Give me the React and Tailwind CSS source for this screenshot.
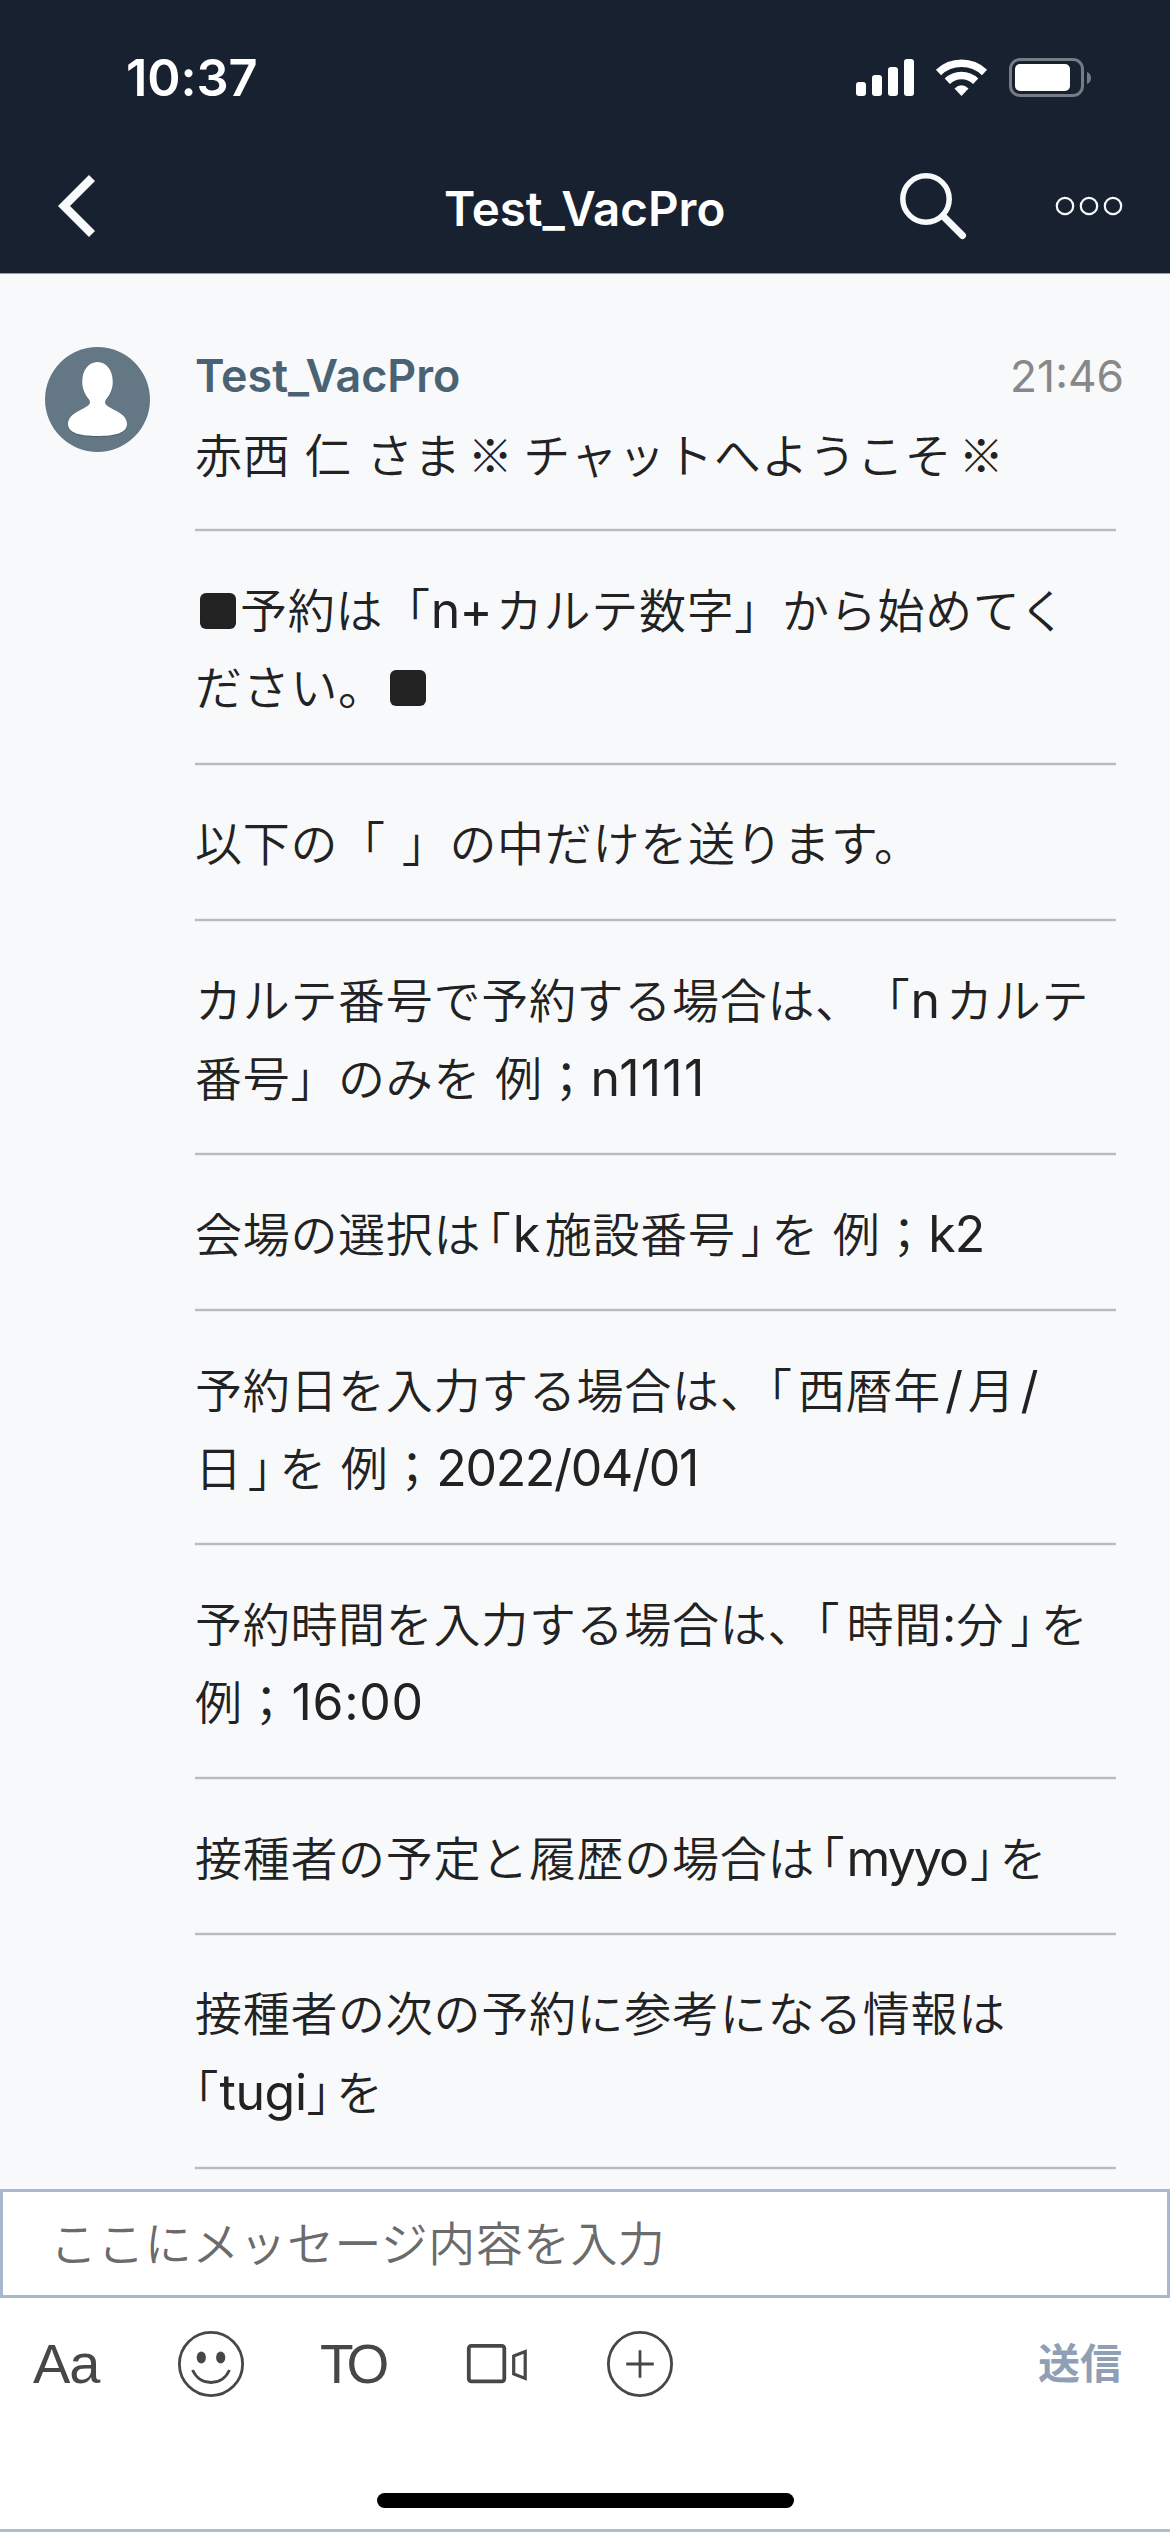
const Latin = ({ children, className = "tracking-normal" }) => (
  <span className={`inline-block font-['Inter',sans-serif] font-normal text-[50px] ${className}`}>{children}</span>
);

const Half = ({ children, className = "" }) => (
  <span className={`inline-block tracking-normal [font-feature-settings:'halt'] ${className}`}>{children}</span>
);

const Kome = () => (
  <span className="inline-block w-[62px] pr-1 text-center font-['Noto_Sans_CJK_JP',sans-serif] text-[45px] tracking-normal">※</span>
);

const Square = ({ className = "" }) => (
  <span
    className={`inline-block w-9 h-9 rounded-[6px] bg-[#222222] text-[#222222] text-[30px] leading-9 text-center overflow-hidden align-[-1px] tracking-normal ${className}`}
  >
    ■
  </span>
);

const Line = ({ children }) => <div className="h-[78px] pt-[2px] leading-[78px] whitespace-pre">{children}</div>;

const Rule = () => (
  <div className="h-[78px] flex items-center">
    <div className="w-[921px] h-1 bg-[#b9bbbe] border-y border-[#ebecef]"></div>
  </div>
);

function StatusBar() {
  return (
    <div className="h-[139px] flex items-start justify-between pl-[126px] pr-[79px] pt-[58px]">
      <div className="text-[50.5px] leading-[40px] font-semibold tracking-[-0.1px]">10:37</div>
      <svg width="235" height="40" viewBox="856 58 235 40" fill="#fff">
        <rect x="856" y="82" width="10" height="14" rx="3" />
        <rect x="872" y="75" width="10" height="21" rx="3" />
        <rect x="888" y="67" width="10" height="29" rx="3" />
        <rect x="904" y="59" width="10" height="37" rx="3" />
        {/* wifi */}
        <g fill="none" stroke="#fff" strokeWidth="7.5">
          <path d="M938.5 72.5a33.5 33.5 0 0 1 46 0" />
          <path d="M947.3 81.3a20.5 20.5 0 0 1 28.4 0" />
        </g>
        <path d="M954.5 88.5q7-6.5 14 0L961.5 96z" />
        {/* battery */}
        <rect x="1010.5" y="59.5" width="72" height="36" rx="9.5" fill="none" stroke="#777c84" strokeWidth="3" />
        <rect x="1015" y="64" width="55" height="27" rx="5" />
        <path d="M1087 72a6.5 6.5 0 0 1 0 12z" fill="#777c84" />
      </svg>
    </div>
  );
}

function NavBar() {
  return (
    <div className="h-[134px] flex items-center pl-[56px] pr-[46px]">
      <svg width="42" height="72" viewBox="56 170 42 72">
        <path d="M92 178L64 206l28 28" fill="none" stroke="#f8f9fb" strokeWidth="8.5" />
      </svg>
      <h1 className="flex-1 pt-1.5 pl-[346px] text-[47.5px] font-semibold">Test_VacPro</h1>
      <svg width="226" height="68" viewBox="898 172 226 68" fill="none" stroke="#f8f9fb">
        <circle cx="926" cy="199" r="23.2" strokeWidth="5.5" />
        <path d="M943 216l19.5 19.5" strokeWidth="7" strokeLinecap="round" />
        <circle cx="1065" cy="206" r="8.2" strokeWidth="2.2" />
        <circle cx="1089" cy="206" r="8.2" strokeWidth="2.2" />
        <circle cx="1113" cy="206" r="8.2" strokeWidth="2.2" />
      </svg>
    </div>
  );
}

function Avatar() {
  return (
    <svg className="shrink-0" width="105" height="105" viewBox="0 0 105 105">
      <circle cx="52.5" cy="52.5" r="52.5" fill="#637785" />
      <path
        d="M52.5 16c9 0 15.300 8.500 15.300 20 0 7-3 13-6 16.500-2 2.500-2.500 4.500-.5 6.500 2 2 6.500 4 11 6.500 5.500 3 9.700 7 9.700 12.500 0 9-12 12-29.500 12s-29.500-3-29.500-12c0-5.500 4.200-9.500 9.700-12.500 4.500-2.500 9-4.500 11-6.500s1.500-4-.5-6.500c-3-3.500-6-9.500-6-16.500 0-11.500 6.300-20 15.300-20z"
        fill="#4d5f6c"
      />
      <path
        d="M52.5 15c9 0 15.300 8.500 15.300 20 0 7-3 13-6 16.500-2 2.500-2.500 4.500-.5 6.500 2 2 6.500 4 11 6.500 5.500 3 9.700 7 9.700 12.500 0 9-12 12-29.500 12s-29.500-3-29.500-12c0-5.500 4.200-9.500 9.700-12.500 4.500-2.500 9-4.500 11-6.500s1.500-4-.5-6.500c-3-3.500-6-9.500-6-16.500 0-11.500 6.300-20 15.300-20z"
        fill="#fff"
      />
    </svg>
  );
}

function Message() {
  return (
    <div className="flex pl-[45px] pt-[73px]">
      <Avatar />
      <div className="ml-[45px] w-[929px]">
        <div className="h-[66px] flex justify-between items-start leading-[59px]">
          <span className="text-[44.8px] font-semibold text-[#4a6374]">Test_VacPro</span>
          <span className="text-[44.3px] text-[#888888]">21:46</span>
        </div>
        <div className="text-[47px] font-[350] tracking-[0.7px] text-[#222222] [text-spacing-trim:space-all]">
          <Line>赤西 仁 さま<Kome />チャットへようこそ<Kome /></Line>
          <Rule />
          <Line><Square className="ml-[5px] mr-[4px]" />予約は「<Latin className="mr-[4px] tracking-[-0.8px]">n+</Latin>カルテ数字」から始めてく</Line>
          <Line>ださい。<Square className="ml-1" /></Line>
          <Rule />
          <Line>以下の「 <span className="ml-[2px]">」の中だけを送ります。</span></Line>
          <Rule />
          <Line>カルテ番号で予約する場合は、「<Latin className="mr-1.5 tracking-normal">n</Latin>カルテ</Line>
          <Line>番号」のみを 例；<Latin className="tracking-[1.2px]">n1111</Latin></Line>
          <Rule />
          <Line>会場の選択は<Half className="ml-1.5 mr-[2px]">「</Half><Latin className="mr-[4px]">k</Latin>施設番号<Half className="ml-[5px] mr-[7px]">」</Half>を 例；<Latin className="tracking-[-1px]">k2</Latin></Line>
          <Rule />
          <Line>予約日を入力する場合は、<Half className="ml-px mr-1.5">「</Half>西暦年<Latin className="mx-[4px]">/</Latin>月<Latin className="ml-[5px]">/</Latin></Line>
          <Line>日<Half className="ml-[5px] mr-[8px]">」</Half>を 例；<Latin className="tracking-[-1.3px]">2022/04/01</Latin></Line>
          <Rule />
          <Line>予約時間を入力する場合は、<Half className="ml-px mr-[7px]">「</Half>時間<Latin>:</Latin>分<Half className="ml-[6px] mr-[7px]">」</Half>を</Line>
          <Line>例；<Latin className="ml-px">16:00</Latin></Line>
          <Rule />
          <Line>接種者の予定と履歴の場合は<Half className="ml-1.5 mr-[2px]">「</Half><Latin className="tracking-[-2px]">myyo</Latin><Half className="ml-[3px] mr-[6px]">」</Half>を</Line>
          <Rule />
          <Line>接種者の次の予約に参考になる情報は</Line>
          <Line><Half>「</Half><Latin className="ml-px tracking-[-0.4px]">tugi</Latin><Half className="mr-[6px]">」</Half>を</Line>
          <Rule />
        </div>
      </div>
    </div>
  );
}

function Toolbar() {
  return (
    <div className="h-[132px] flex items-center justify-between pl-[33px] pr-[48px] font-['Liberation_Sans','Noto_Sans_CJK_JP',sans-serif] text-[#474747]">
      <div className="flex items-center">
        <span className="w-[144px] text-[56px] tracking-[-1px]">Aa</span>
        <svg className="mr-[75px]" width="68" height="68" viewBox="0 0 68 68" fill="none" stroke="#474747">
          <circle cx="34" cy="34" r="31.600" strokeWidth="2.800" />
          <ellipse cx="24.300" cy="27.500" rx="4.600" ry="6" fill="#474747" stroke="none" />
          <ellipse cx="43.700" cy="27.500" rx="4.600" ry="6" fill="#474747" stroke="none" />
          <path d="M15.500 40c4 8.500 10.500 12.500 18.500 12.500s14.500-4 18.500-12.500" strokeWidth="2.800" />
        </svg>
        <span className="w-[145px] text-[55px] tracking-[-6px]">TO</span>
        <svg className="mr-[77px]" width="64" height="44" viewBox="465 2342 64 44" fill="none" stroke="#474747">
          <rect x="468.800" y="2345.800" width="35.500" height="35.500" rx="2.500" strokeWidth="3.800" />
          <path d="M513.700 2356l11.500-4.500v27l-11.500-4.500z" strokeWidth="3.200" />
        </svg>
        <svg width="68" height="68" viewBox="0 0 68 68" fill="none" stroke="#474747">
          <circle cx="34" cy="34" r="31.600" strokeWidth="2.800" />
          <path d="M20.200 34h27.600M34 20.200v27.600" strokeWidth="2.800" />
        </svg>
      </div>
      <span className="pt-px text-[42px] font-bold text-[#919fb5]">送信</span>
    </div>
  );
}

export default function App() {
  return (
    <div lang="ja" className="w-[1170px] h-[2532px] flex flex-col overflow-hidden bg-[#f8f9fb] font-['Inter','Noto_Sans_CJK_JP',sans-serif]">
      <header className="h-[274px] shrink-0 bg-[#18212f] text-white border-b border-[#9a9da3]">
        <StatusBar />
        <NavBar />
      </header>

      <main className="h-[1915px] shrink-0 overflow-hidden">
        <Message />
      </main>

      <footer className="h-[343px] shrink-0 flex flex-col bg-white border-b-[3px] border-[#afbdd4]">
        <div className="h-[109px] shrink-0 border-[3px] border-[#a9b8ce] flex items-center pl-[47px] pt-[2px] text-[47px] font-[350] tracking-[0.4px] text-[#6b6b6b]">
          ここにメッセージ内容を入力
        </div>
        <Toolbar />
        <div className="w-[417px] h-[15px] mx-auto mt-[63px] rounded-full bg-black"></div>
      </footer>
    </div>
  );
}
